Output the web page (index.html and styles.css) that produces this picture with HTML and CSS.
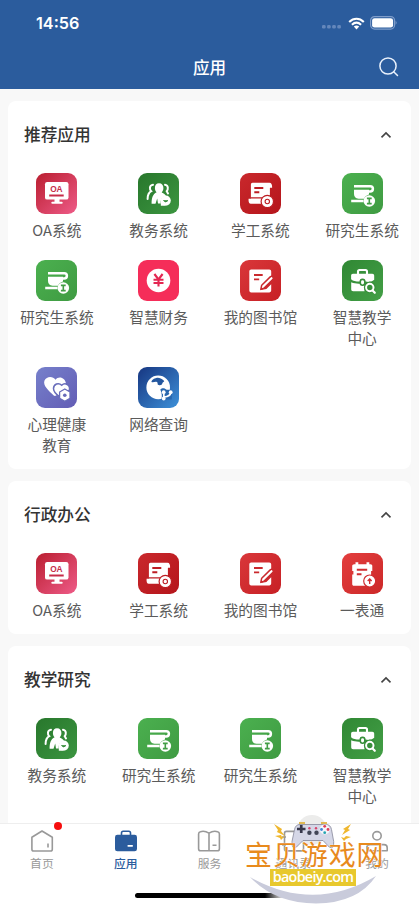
FILE: index.html
```html
<!DOCTYPE html>
<html lang="zh-CN">
<head>
<meta charset="utf-8">
<title>应用</title>
<link rel="stylesheet" href="styles.css">
</head>
<body>
<svg class="defs" aria-hidden="true">
  <symbol id="oa" viewBox="0 0 41 41">
    <rect x="9" y="9" width="23.5" height="17.6" rx="2.2" fill="#fff"/>
    <path d="M18.5 26h5v2.8h2.2a1 1 0 0 1 0 2h-9.4a1 1 0 0 1 0-2h2.2z" fill="#fff"/>
    <text x="20.4" y="19" class="oa-text" textLength="12.5" lengthAdjust="spacingAndGlyphs">OA</text>
    <path d="M13.2 22.4h14.5" stroke="#c62c48" stroke-width="2"/>
  </symbol>
  <symbol id="people" viewBox="0 0 41 41">
    <g fill="none" stroke="#fff" stroke-width="2" stroke-linecap="round">
      <path d="M15 11.8c-4 .5-3.5 5-1.8 6.4-2.6 1.5-3.6 4.5-3.6 7.8M27 11.8c3.7.5 3.2 5 1.7 6.4l1.3 2.3"/>
    </g>
    <path d="M21 10.3c3 0 4.5 2.1 4.4 4.8 0 2-.8 3.3-1.7 4.3 2.2 1 3.5 2 4.4 3.3-3.6.7-5.8 3-5.3 7.8H20l-.8-5-1.7 5.3h-3.9c0-5.8 1.2-9.8 5-11.6-1-1-1.7-2.4-1.7-4.3 0-2.7 1.5-4.6 4.1-4.6z" fill="#fff"/>
    <circle cx="27.7" cy="27.6" r="5.1" fill="#fff"/>
    <path d="M22.8 28v4.7h4.4z" fill="#fff"/>
    <path d="M25.4 27.5h4.6q-2.3 3-4.6 0z" fill="#318936" stroke="#318936" stroke-width=".6"/>
  </symbol>
  <symbol id="scroll" viewBox="0 0 41 41">
    <path d="M12.5 9.8h17c2 0 2.8 2.1 2.6 5h-2.2v8.8c-3.8-1-7.4 1.1-8.3 4.5l-.1 2.6H10.8c-1.8 0-2.5-2-2.2-5h2.3V12c0-1.4.6-2.2 1.6-2.2z" fill="#fff"/>
    <path d="M10.5 24.9h12" stroke="#bd1d23" stroke-width="1.1"/>
    <path d="M14.3 15h9M14.3 19.3h5" stroke="#bd1d23" stroke-width="1.9"/>
    <circle cx="27.3" cy="28.5" r="6.2" fill="#fff" stroke="#bd1d23" stroke-width="1.2"/>
    <circle cx="27.3" cy="28.5" r="2.2" fill="none" stroke="#bd1d23" stroke-width="1.1"/>
  </symbol>
  <symbol id="cup" viewBox="0 0 41 41">
    <path d="M12 13.2h16.2c3.6 0 3.6 5.3 0 5.3h-1.5" fill="none" stroke="#fff" stroke-width="2.5"/>
    <path d="M12 16.8h15v4.6c-2.6.6-4.3 2.3-4.8 4.3h-5.7c-3 0-4.5-2-4.5-4.7z" fill="#fff"/>
    <path d="M9.2 28h12.3" stroke="#fff" stroke-width="2.3"/>
    <circle cx="27.3" cy="28" r="5.8" fill="#fff"/>
    <path d="M24.9 25.4h4.8M24.9 30.6h4.8M27.3 25.5v5" stroke="#429e45" stroke-width="1.6"/>
  </symbol>
  <symbol id="money" viewBox="0 0 41 41">
    <circle cx="20.5" cy="20.5" r="11.8" fill="#fff"/>
    <path d="M16.4 14l4.1 5.5 4.1-5.5M20.5 19v7.5M15.5 19.7h10M15.5 23h10" fill="none" stroke="#e42752" stroke-width="2.1"/>
  </symbol>
  <symbol id="note" viewBox="0 0 41 41">
    <path d="M11.2 9.4h18c1.3 0 2 .7 2 2v4.9L21 25.7V30l5.4-1 4.8-4.7v6c0 1.3-.8 2.1-2 2.1h-18c-1.2 0-1.9-.8-1.9-2.1V11.4c0-1.3.7-2 1.9-2z" fill="#fff"/>
    <path d="M14 15h8.7M14 19.4h5.2" stroke="#c9292d" stroke-width="1.9"/>
    <path d="M20.8 29.4l.9-4.2 8.8-8.6c1.8-1 3.6 1 2.5 2.8l-8.6 8.5z" fill="#fff" stroke="#c9292d" stroke-width="1.5" stroke-linejoin="round"/>
  </symbol>
  <symbol id="case" viewBox="0 0 41 41">
    <path d="M16 15v-3.5c0-1.1.5-1.5 1.5-1.5h6c1 0 1.5.4 1.5 1.5V15" fill="none" stroke="#fff" stroke-width="2.1"/>
    <path d="M11 13.7h19.2c1.3 0 2 .7 2 2v4.1c-3 2.5-6 2.5-8.5 1.8h-6.6c-3.3 0-6-.6-8-2.4v-3.5c0-1.3.6-2 1.9-2z" fill="#fff"/>
    <path d="M9.2 22.3c2.5 1.1 4.8 1.4 7.3 1.4h6v7.5H11.2c-1.3 0-2-.7-2-2z" fill="#fff"/>
    <rect x="18.3" y="19.4" width="4.5" height="5.8" rx="2.2" fill="#fff" stroke="#378f3a" stroke-width="1.6"/>
    <circle cx="27.8" cy="27.4" r="5.9" fill="#378f3a"/>
    <path d="M30.6 30.5l2.2 2.3" stroke="#fff" stroke-width="2.2" stroke-linecap="round"/>
    <circle cx="27.8" cy="27.5" r="3.7" fill="none" stroke="#fff" stroke-width="2"/>
  </symbol>
  <symbol id="heart" viewBox="0 0 41 41">
    <path d="M19.5 12.8c-2.7-4-9-3.6-11 .8-2 4.9 4.2 10.3 9.5 15.2 1.5.3 2.5-.3 3.3-1.4L30 16.8c-.5-6.6-7.8-8.4-10.5-4z" fill="#fff"/>
    <path d="M25.7 18.3c-3.2-3.3-8-1.1-8.2 3.1 0 2.5 1.8 5 5.5 8l10.3-6c1.5-5.9-4.5-8.1-7.6-5.1z" fill="#fff" stroke="#686cba" stroke-width="1.5"/>
    <path d="M28.8 22l5.2 3v6.2l-5.2 3-5.2-3V25z" fill="#fff" stroke="#686cba" stroke-width="1.3" stroke-linejoin="round"/>
    <circle cx="28.8" cy="28.2" r="1.8" fill="#686cba"/>
  </symbol>
  <symbol id="globe" viewBox="0 0 41 41">
    <circle cx="20.2" cy="20.4" r="11.8" fill="#fff"/>
    <path d="M18.3 10.9c-3.6.8-5.3 3.2-4.8 4.1 1.8 1 3.7-.8 5.3 0 1.6.9 0 2.4 1.8 3 2.3.8 3.4-.5 3.8-1.8.5-1.5 3-1.4 1-3-2-1.8-4.4-2.8-7.1-2.3z" fill="#24579f"/>
    <path d="M22.3 22.5c2-2.1 4.8-1.2 6.3.2h5.2v9.8H23.5c.7-4 .3-6.400-1.200-10z" fill="#2867ae"/>
    <path d="M25.8 26.4v4.5M26.2 30c4.2-.4 6.4-2 6.6-4.6" fill="none" stroke="#fff" stroke-width="1.7"/>
    <g fill="#fff"><circle cx="25.7" cy="25.2" r="1.9"/><circle cx="25.7" cy="31.5" r="1.9"/><circle cx="32.7" cy="25.2" r="1.9"/></g>
  </symbol>
  <symbol id="form" viewBox="0 0 41 41">
    <path d="M12.3 11.2h1.2V9.2h2.8v2h8.2v-2h2.8v2h1.2c1.2 0 1.8.7 1.8 1.9v4.8h-1.2v4l-6 10.9H12c-1.2 0-1.8-.7-1.8-1.8V21.5h1.2V18h-1.2v-5c0-1.1.9-1.8 2.1-1.8z" fill="#fff"/>
    <path d="M14.8 16.7h10.4M14.8 21.2h4.7" stroke="#d02d30" stroke-width="1.9"/>
    <circle cx="27.7" cy="28" r="6" fill="#fff" stroke="#d02d30" stroke-width="1.2"/>
    <path d="M27.7 31.1v-4.6M25.7 27.9l2-2 2 2" fill="none" stroke="#d02d30" stroke-width="1.4"/>
  </symbol>
  <symbol id="chevron" viewBox="0 0 12 8"><path d="M1.5 6.4L6 1.9l4.5 4.5" fill="none" stroke="#444" stroke-width="1.6"/></symbol>
</svg>

<div class="phone">
  <header class="header">
    <div class="status">
      <span class="time">14:56</span>
      <span class="status-icons">
        <svg class="dots" viewBox="0 0 20 4"><g fill="#6487bb"><rect width="3.6" height="3.4" rx="1.2"/><rect x="5.1" width="3.6" height="3.4" rx="1.2"/><rect x="10.2" width="3.6" height="3.4" rx="1.2"/><rect x="15.3" width="3.6" height="3.4" rx="1.2"/></g></svg>
        <svg class="wifi" viewBox="0 0 17 13"><g fill="none" stroke="#fff" stroke-width="2.1"><path d="M1.2 4.9c4.4-4.2 10.2-4.2 14.6 0"/><path d="M3.9 7.8c2.8-2.6 6.4-2.6 9.2 0"/></g><path d="M5.8 9.6q2.7-2 5.4 0L8.5 12.6z" fill="#fff"/></svg>
        <svg class="battery" viewBox="0 0 27 14"><rect x=".6" y=".6" width="24" height="12.5" rx="4" fill="none" stroke="#7f9dca" stroke-width="1.2"/><rect x="2.1" y="2.2" width="21" height="9.4" rx="2.4" fill="#fff"/><path d="M25.6 4.8q2 2 0 4z" fill="#7f9dca"/></svg>
      </span>
    </div>
    <div class="nav">
      <h1>应用</h1>
      <svg class="search" viewBox="0 0 20 20"><circle cx="9" cy="9" r="8.1"/><path d="M14.7 14.7l3.8 3.8"/></svg>
    </div>
  </header>

  <main class="content">
    <section class="card">
      <div class="card-head"><h2>推荐应用</h2><svg class="chevron"><use href="#chevron"/></svg></div>
      <div class="apps">
        <div class="app"><svg class="icon rose"><use href="#oa"/></svg><span>OA系统</span></div>
        <div class="app"><svg class="icon forest"><use href="#people"/></svg><span>教务系统</span></div>
        <div class="app"><svg class="icon crimson"><use href="#scroll"/></svg><span>学工系统</span></div>
        <div class="app"><svg class="icon green"><use href="#cup"/></svg><span>研究生系统</span></div>
        <div class="app"><svg class="icon green"><use href="#cup"/></svg><span>研究生系统</span></div>
        <div class="app"><svg class="icon pink"><use href="#money"/></svg><span>智慧财务</span></div>
        <div class="app"><svg class="icon red"><use href="#note"/></svg><span>我的图书馆</span></div>
        <div class="app"><svg class="icon leaf"><use href="#case"/></svg><span>智慧教学<br>中心</span></div>
        <div class="app"><svg class="icon violet"><use href="#heart"/></svg><span>心理健康<br>教育</span></div>
        <div class="app"><svg class="icon blue"><use href="#globe"/></svg><span>网络查询</span></div>
      </div>
    </section>
    <section class="card">
      <div class="card-head"><h2>行政办公</h2><svg class="chevron"><use href="#chevron"/></svg></div>
      <div class="apps">
        <div class="app"><svg class="icon rose"><use href="#oa"/></svg><span>OA系统</span></div>
        <div class="app"><svg class="icon crimson"><use href="#scroll"/></svg><span>学工系统</span></div>
        <div class="app"><svg class="icon red"><use href="#note"/></svg><span>我的图书馆</span></div>
        <div class="app"><svg class="icon scarlet"><use href="#form"/></svg><span>一表通</span></div>
      </div>
    </section>
    <section class="card last">
      <div class="card-head"><h2>教学研究</h2><svg class="chevron"><use href="#chevron"/></svg></div>
      <div class="apps">
        <div class="app"><svg class="icon forest"><use href="#people"/></svg><span>教务系统</span></div>
        <div class="app"><svg class="icon green"><use href="#cup"/></svg><span>研究生系统</span></div>
        <div class="app"><svg class="icon green"><use href="#cup"/></svg><span>研究生系统</span></div>
        <div class="app"><svg class="icon leaf"><use href="#case"/></svg><span>智慧教学<br>中心</span></div>
      </div>
    </section>
  </main>

  <footer class="footer">
    <nav class="tabs">
      <div class="tab"><svg viewBox="0 0 24 24"><path d="M1.9 8.3L12 2l10.3 6.3v11.9q0 1.8-1.8 1.8H3.7q-1.8 0-1.8-1.8z"/><path d="M18 14.5v4"/></svg><span>首页</span><i class="badge"></i></div>
      <div class="tab active"><svg viewBox="0 0 24 24"><path d="M7.5 7V4q0-1.7 1.7-1.7h5.6q1.7 0 1.7 1.7v3"/><rect class="fill" x="1" y="5.8" width="22" height="16.5" rx="2.4"/><path class="slot" d="M14.2 16.9h4"/></svg><span>应用</span></div>
      <div class="tab"><svg viewBox="0 0 24 24"><path d="M12 4.1Q7.6 1.5 3.4 2.7 1.6 3 1.6 5v14.7q0 2.1 2 2.1h16.8q2 0 2-2.1V5q0-2-1.8-2.3Q16.2 1.5 12 4.1zM12 4v17.8M15.5 16.3h4"/></svg><span>服务</span></div>
      <div class="tab"><svg viewBox="0 0 24 24"><rect x="3.5" y="2.4" width="19" height="19.5" rx="2"/><path d="M1 8h4M1 16h4M11 16h6"/></svg><span>通讯录</span></div>
      <div class="tab"><svg viewBox="0 0 24 24"><circle cx="12" cy="6.8" r="4.2"/><path d="M1.8 21.8v-3q0-3.2 3.2-3.2h14q3.2 0 3.2 3.2v3z"/></svg><span>我的</span></div>
    </nav>
    <div class="home-bar"></div>
    <div class="watermark">
      <svg class="mark-art" viewBox="0 0 140 95">
        <defs><linearGradient id="fade"><stop offset="0" stop-color="#fff" stop-opacity="0"/><stop offset="1" stop-color="#fff"/></linearGradient></defs>
        <path d="M20 78h20v9H20z" fill="url(#fade)"/>
        <path d="M40 78h60v9H40z" fill="#fff"/>
        <path d="M5 63q64 36 126-1Q113 89 71 89.500 29 89 5 63z" fill="#c9cbdb"/>
        <circle cx="67" cy="16" r="15" fill="#ececeb"/>
        <path d="M54 9h6M76 9h6" stroke="#dca820" stroke-width="1.6"/>
        <path d="M55 10.5h26q4.5 0 5.5 5l2.2 12q.5 8.5-4.5 5.5L78 26.5H58L51.5 33q-5 3-4.500-5.500l2.500-12q1-5 5.500-5z" fill="#d5d7e7" stroke="#858799" stroke-width=".8"/>
        <path d="M52 15h8.5M56.25 11v8" stroke="#37384b" stroke-width="2.7"/>
        <g fill="#424657"><circle cx="64.4" cy="18.8" r="2.2"/><circle cx="71.5" cy="18.8" r="2.2"/></g>
        <g fill="#d8436a"><circle cx="64.4" cy="14.3" r="1.2"/><circle cx="71" cy="14.3" r="1.2"/></g>
        <circle cx="79.7" cy="15.5" r="5" fill="#f6f6fa"/>
        <g fill="#df3c57"><circle cx="79.7" cy="12.3" r="1.4"/><circle cx="83" cy="15.5" r="1.4"/></g><circle cx="76.5" cy="15.5" r="1.4" fill="#4085d8"/><circle cx="79.7" cy="18.7" r="1.4" fill="#27a5b2"/>
        <g fill="#efb72e"><path d="M29 10l8 5-1 2 4 5-8-4 1-2zM30 22l6-1 1 2 3-1-4 4-1-2zM106 10l-8 5 2 1-3 5 8-5-2-1zM106 23l-5-1-2 2-3-1 3 4 2-2z"/></g>
      </svg>
      <div class="mark-title">宝贝游戏网</div>
      <div class="mark-url">baobeiy.com</div>
    </div>
  </footer>
</div>
</body>
</html>
```

FILE: styles.css
```css
* { box-sizing: border-box; }

body {
  margin: 0;
  font-family: "Noto Sans CJK SC", sans-serif;
  background: #f8f8f8;
}

h1, h2 { margin: 0; font-weight: 500; }

.defs { display: none; }

.phone {
  width: 419px;
  height: 907px;
  overflow: hidden;
  display: flex;
  flex-direction: column;
}

.header {
  flex: none;
  height: 89px;
  background: #2b5c9d;
  color: #fff;
}

.status {
  height: 45px;
  padding: 1px 22px 0 36px;
  display: flex;
  align-items: center;
  justify-content: space-between;
}

.time { font: 600 16.2px/20px Inter, sans-serif; }

.status-icons { display: flex; align-items: center; }
.dots { width: 20px; height: 4px; margin: 7px 6px 0 0; }
.wifi { width: 17px; height: 13px; margin-right: 5px; }
.battery { width: 27px; height: 14px; }

.nav {
  height: 44px;
  padding: 0 20px;
  display: grid;
  grid-template-columns: 20px 1fr 20px;
  align-items: center;
}

.nav h1 { grid-column: 2; text-align: center; font-size: 16.6px; line-height: 24px; }
.search { width: 20px; height: 20px; fill: none; stroke: #e9f1fc; stroke-width: 1.5; stroke-linecap: round; }

.content {
  flex: 1;
  min-height: 0;
  overflow: hidden;
  padding: 12px 8px 0;
  display: flex;
  flex-direction: column;
  gap: 12px;
}

.card { flex: none; background: #fff; border-radius: 8px; padding-bottom: 13.6px; }
.card.last { padding-bottom: 32px; }

.card-head {
  height: 72px;
  padding: 20px 19px 0 16px;
  display: flex;
  justify-content: space-between;
}

.card-head h2 { font-size: 16.7px; line-height: 26px; color: #333; }
.chevron { width: 12px; height: 8px; margin-top: 10px; }

.apps {
  margin: 0 -2px;
  display: grid;
  grid-template-columns: repeat(4, 1fr);
  row-gap: 19.7px;
}

.app {
  display: flex;
  flex-direction: column;
  align-items: center;
  gap: 5px;
  text-align: center;
  font-size: 14.7px;
  line-height: 21px;
  color: #5b5b5b;
  white-space: nowrap;
}

.icon { width: 41px; height: 41px; border-radius: 9px; }
.oa-text { font: 700 8.5px "Liberation Sans", sans-serif; fill: #c62c48; text-anchor: middle; }
.rose { background: linear-gradient(135deg, #ba1e30, #ee5b88); }
.forest { background: linear-gradient(135deg, #28772c, #3b9540); }
.crimson { background: linear-gradient(135deg, #c9282c, #b5151b); }
.green { background: linear-gradient(135deg, #4bb04f, #3f9b42); }
.pink { background: #f52d59; }
.red { background: linear-gradient(135deg, #d9373a, #c72025); }
.leaf { background: linear-gradient(135deg, #308834, #439f46); }
.violet { background: linear-gradient(135deg, #7680cb, #635db5); }
.blue { background: linear-gradient(135deg, #173681, #3d91d9); }
.scarlet { background: linear-gradient(135deg, #e33e3e, #cc2828); }

.footer {
  flex: none;
  position: relative;
  height: 84px;
  background: #fff;
  border-top: 1px solid #eee;
}

.tabs { display: grid; grid-template-columns: repeat(5, 1fr); padding-top: 5px; }

.tab {
  position: relative;
  display: flex;
  flex-direction: column;
  align-items: center;
  gap: 1px;
  font-size: 11.8px;
  line-height: 18px;
  color: #999;
}

.tab svg { width: 24px; height: 24px; fill: none; stroke: #999; stroke-width: 1.6; stroke-linejoin: round; }
.tab.active { color: #2b5c9d; font-weight: 500; }
.tab.active svg { stroke: #2b5c9d; }
.tab .fill { fill: #2b5c9d; stroke: none; }
.tab .slot { stroke: #fff; stroke-linecap: round; }

.badge {
  position: absolute;
  left: 54px;
  top: -7px;
  width: 8px;
  height: 8px;
  border-radius: 50%;
  background: #f60d0d;
}

.home-bar { width: 149px; height: 5px; margin: 21px auto 0; border-radius: 3px; background: #000; }

.watermark { position: absolute; left: 245px; top: -10px; width: 140px; height: 95px; }
.mark-art { position: absolute; inset: 0; width: 140px; height: 95px; }

.mark-title {
  position: absolute;
  left: 0;
  top: 23px;
  font-size: 27px;
  line-height: 34px;
  letter-spacing: 0.9px;
  white-space: nowrap;
  color: #e88a1d;
  text-shadow: 0 0 1px #fff, 0 0 1px #fff;
}

.mark-url {
  position: absolute;
  left: 25px;
  top: 55px;
  width: 86px;
  height: 17px;
  background: #e8c82d;
  color: #fff;
  font: 600 14.4px/16px "Open Sans", sans-serif;
  letter-spacing: -0.75px;
  text-align: center;
}
```
